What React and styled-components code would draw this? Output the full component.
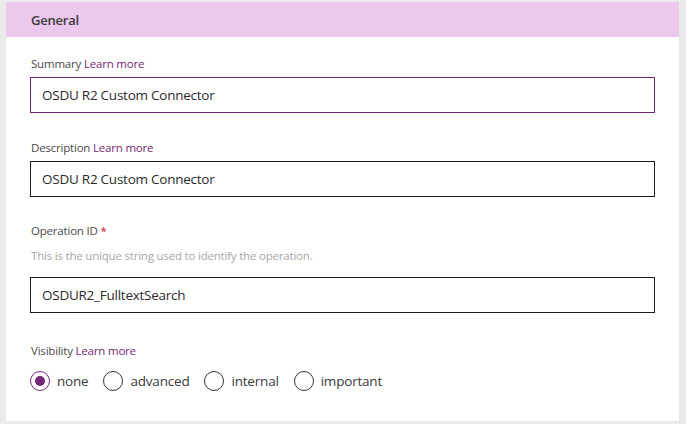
import styled, { createGlobalStyle } from 'styled-components';

const GlobalStyle = createGlobalStyle`
  html, body {
    margin: 0;
    padding: 0;
    background: #eaeaea;
  }
  body {
    font-family: "Open Sans", "Noto Sans", Arial, sans-serif;
  }
`;

const Page = styled.div`
  width: 686px;
  height: 424px;
  padding: 2px 7px 0 6px;
  box-sizing: border-box;
`;

const Card = styled.section`
  background: #ffffff;
  width: 673px;
  height: 419px;
`;

const Header = styled.div`
  height: 35px;
  background: #ecc8ec;
  display: flex;
  align-items: center;
  padding-left: 25px;
  font-size: 13px;
  font-weight: 600;
  color: #3b3b3b;
  letter-spacing: -0.2px;
`;

const Body = styled.div`
  padding: 19px 24px 0 24px;
  display: flex;
  flex-direction: column;
`;

const Field = styled.div`
  display: flex;
  flex-direction: column;
  margin-top: ${props => props.gap || 0}px;
`;

const Label = styled.div`
  font-size: 11.5px;
  line-height: 16px;
  color: #4a4a4a;
  letter-spacing: -0.2px;
  padding-left: 1px;
`;

const Link = styled.a`
  color: #742774;
  text-decoration: none;
`;

const Required = styled.span`
  color: #c50f1f;
`;

const Help = styled.div`
  font-size: 11.5px;
  line-height: 16px;
  color: #a6a6a6;
  letter-spacing: -0.2px;
  margin-top: 9px;
  padding-left: 1px;
`;

const Input = styled.div`
  margin-top: ${props => props.gap}px;
  height: 36px;
  box-sizing: border-box;
  border: 1px solid ${props => (props.focused ? '#742774' : '#1a1a1a')};
  display: flex;
  align-items: center;
  padding-left: 11px;
  font-size: 13.5px;
  color: #2b2b2b;
  letter-spacing: -0.25px;
`;

const RadioGroup = styled.div`
  display: flex;
  align-items: center;
  margin-top: 12px;
`;

const RadioItem = styled.label`
  display: flex;
  align-items: center;
  margin-right: 15px;
  font-size: 13.5px;
  color: #3a3a3a;
  letter-spacing: -0.2px;
`;

const Circle = styled.span`
  width: 20px;
  height: 20px;
  box-sizing: border-box;
  border-radius: 50%;
  border: 1px solid ${props => (props.checked ? '#742774' : '#333')};
  display: flex;
  align-items: center;
  justify-content: center;
  margin-right: 7px;
  &::after {
    content: '';
    width: 10px;
    height: 10px;
    border-radius: 50%;
    background: ${props => (props.checked ? '#742774' : 'transparent')};
  }
`;

const options = ['none', 'advanced', 'internal', 'important'];

export default function App() {
  return (
    <Page>
      <GlobalStyle />
      <Card>
        <Header>General</Header>
        <Body>
          <Field>
            <Label>
              Summary <Link>Learn more</Link>
            </Label>
            <Input gap={5} focused>
              OSDU R2 Custom Connector
            </Input>
          </Field>
          <Field gap={27}>
            <Label>
              Description <Link>Learn more</Link>
            </Label>
            <Input gap={5}>OSDU R2 Custom Connector</Input>
          </Field>
          <Field gap={26}>
            <Label>
              Operation ID <Required>*</Required>
            </Label>
            <Help>This is the unique string used to identify the operation.</Help>
            <Input gap={13}>OSDUR2_FulltextSearch</Input>
          </Field>
          <Field gap={30}>
            <Label>
              Visibility <Link>Learn more</Link>
            </Label>
            <RadioGroup>
              {options.map(option => (
                <RadioItem key={option}>
                  <Circle checked={option === 'none'} />
                  {option}
                </RadioItem>
              ))}
            </RadioGroup>
          </Field>
        </Body>
      </Card>
    </Page>
  );
}
